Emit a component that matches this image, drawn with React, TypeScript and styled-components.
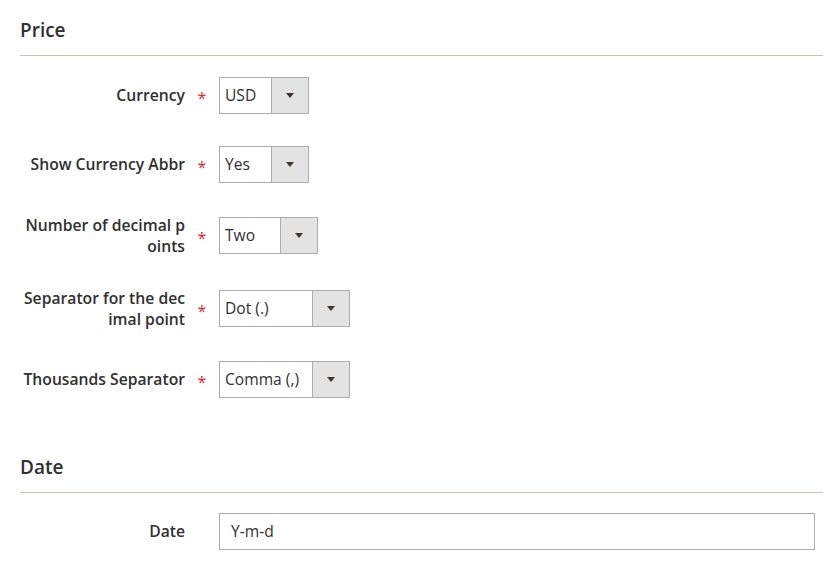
import React from "react";
import styled, { createGlobalStyle } from "styled-components";

const Global = createGlobalStyle`
  html, body { margin: 0; padding: 0; background: #ffffff; }
  body { font-family: "Open Sans", "Noto Sans", sans-serif; color: #303030; }
  * { box-sizing: border-box; }
`;

const Page = styled.div`
  padding: 16px 0 0 20px;
  display: flex;
  flex-direction: column;
`;

const Section = styled.section<{ $gapTop?: number }>`
  margin-top: ${(p) => p.$gapTop ?? 0}px;
  display: flex;
  flex-direction: column;
`;

const Title = styled.h2`
  margin: 0;
  font-size: 19px;
  line-height: 28px;
  font-weight: 600;
  color: #303030;
  padding-bottom: 11px;
  border-bottom: 1px solid #cac3b4;
`;

const Rows = styled.div<{ $top: number }>`
  margin-top: ${(p) => p.$top}px;
  display: flex;
  flex-direction: column;
  gap: 32px;
  padding-right: 8px;
`;

const Row = styled.div`
  display: flex;
  align-items: center;
  min-height: 37px;
`;

const Label = styled.label`
  width: 165px;
  flex: none;
  text-align: right;
  font-size: 15.7px;
  line-height: 20.5px;
  font-weight: 600;
  color: #303030;
  word-break: break-all;
`;

const Req = styled.span`
  width: 34px;
  flex: none;
  text-align: center;
  color: #e22626;
  font-size: 16px;
  line-height: 20px;
  padding-top: 4px;
`;

const SelectBox = styled.div`
  display: flex;
  height: 37px;
  border: 1px solid #adadad;
  background: #ffffff;
`;

const SelectValue = styled.span`
  padding: 0 12px 0 5px;
  font-size: 15.6px;
  line-height: 35px;
  color: #303030;
  white-space: nowrap;
`;

const ArrowBox = styled.span`
  width: 37px;
  border-left: 1px solid #adadad;
  background: #e3e3e3;
  display: flex;
  align-items: center;
  justify-content: center;
`;

const TextInput = styled.div`
  flex: 1;
  height: 37px;
  border: 1px solid #adadad;
  padding: 0 0 0 11px;
  font-size: 15.6px;
  line-height: 35px;
  color: #303030;
`;

const Arrow = () => (
  <svg width="8" height="5" viewBox="0 0 8 5">
    <path d="M0 0 H8 L4 5 Z" fill="#41362f" />
  </svg>
);

type SelectRow = { label: string; value: string; minValue: number };

const priceRows: SelectRow[] = [
  { label: "Currency", value: "USD", minValue: 51 },
  { label: "Show Currency Abbr", value: "Yes", minValue: 51 },
  { label: "Number of decimal points", value: "Two", minValue: 60 },
  { label: "Separator for the decimal point", value: "Dot (.)", minValue: 92 },
  { label: "Thousands Separator", value: "Comma (,)", minValue: 92 },
];

export default function App() {
  return (
    <>
      <Global />
      <Page>
        <Section>
          <Title>Price</Title>
          <Rows $top={21}>
            {priceRows.map((r) => (
              <Row key={r.label}>
                <Label>{r.label}</Label>
                <Req>*</Req>
                <SelectBox>
                  <SelectValue style={{ minWidth: r.minValue }}>{r.value}</SelectValue>
                  <ArrowBox>
                    <Arrow />
                  </ArrowBox>
                </SelectBox>
              </Row>
            ))}
          </Rows>
        </Section>
        <Section $gapTop={55}>
          <Title>Date</Title>
          <Rows $top={20}>
            <Row>
              <Label>Date</Label>
              <Req />
              <TextInput>Y-m-d</TextInput>
            </Row>
          </Rows>
        </Section>
      </Page>
    </>
  );
}
